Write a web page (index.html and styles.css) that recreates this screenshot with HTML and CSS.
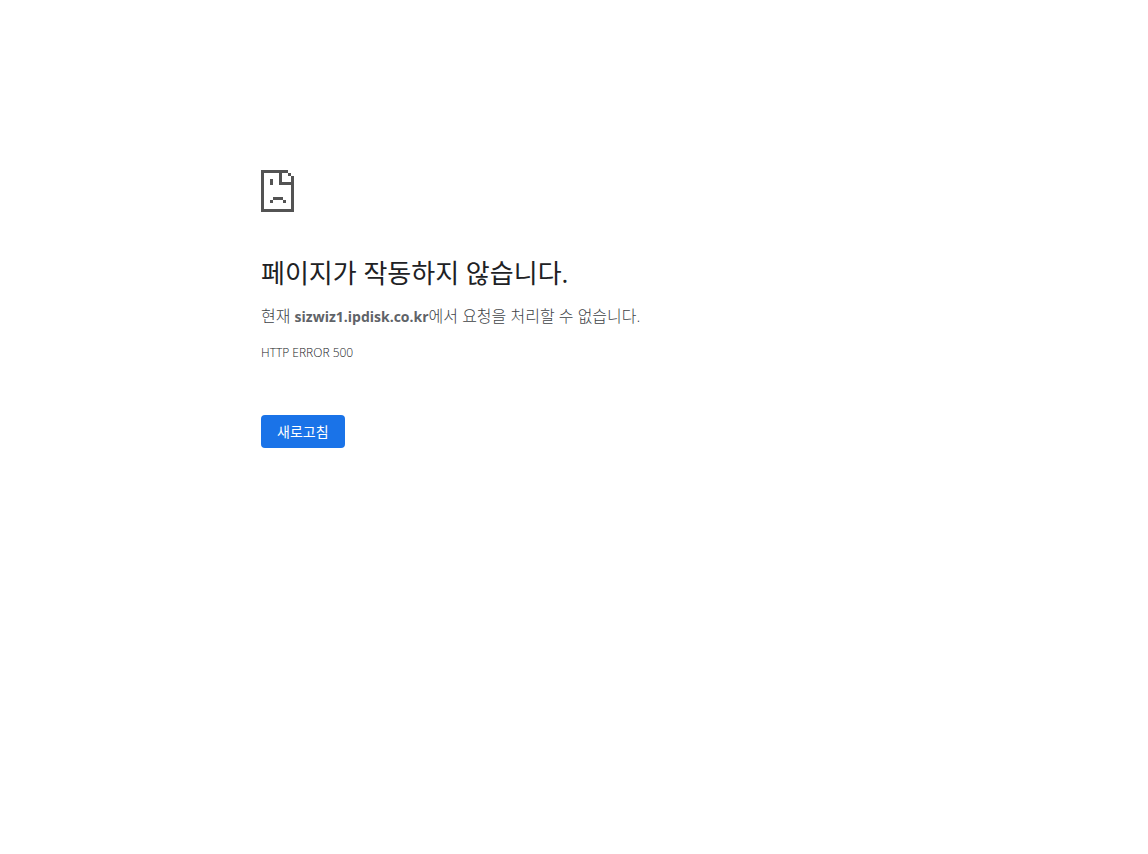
FILE: index.html
```html
<!DOCTYPE html>
<html lang="ko">
<head>
  <meta charset="UTF-8">
  <meta name="viewport" content="width=device-width, initial-scale=1">
  <title>sizwiz1.ipdisk.co.kr</title>
  <link rel="stylesheet" href="styles.css">
</head>
<body>

  <main class="error-page">
    <svg class="icon" viewBox="0 0 33 42" shape-rendering="crispEdges" aria-hidden="true">
      <path d="M0 0H27V3H30V6H33V42H0ZM3 3V39H30V15H18V3ZM21 3V12H30V6H27V3Z" fill-rule="evenodd"/>
      <path d="M9 9h3v6h-3zM12 27h10v3h-10zM9 30h3v3h-3zM22 30h3v3h-3z"/>
    </svg>
    <h1 class="title">페이지가 작동하지 않습니다.</h1>
    <p class="summary">현재 <strong>sizwiz1.ipdisk.co.kr</strong>에서 요청을 처리할 수 없습니다.</p>
    <p class="error-code">HTTP ERROR 500</p>
    <button type="button" class="reload" onclick="location.reload()">새로고침</button>
  </main>

</body>
</html>
```
FILE: styles.css
```css
body {
  margin: 0;
  background: #fff;
  color: #404347;
  font-family: 'Open Sans', 'Noto Sans CJK KR', sans-serif;
  font-size: 16px;
  font-weight: 300;
}

.error-page {
  box-sizing: border-box;
  max-width: 626px;
  margin: 0 auto;
  padding-top: 170px;
}

.icon {
  display: block;
  width: 33px;
  height: 42px;
  fill: #535353;
}

.title {
  margin: 43px 0 13px;
  color: #202124;
  font-size: 26px;
  font-weight: 400;
  line-height: 36px;
}

.summary {
  margin: 0 0 15px;
  line-height: 24px;
}

.summary strong {
  color: #5f6368;
  font-size: 14px;
  font-weight: 700;
}

.error-code {
  margin: 0;
  color: #202124;
  font-size: 12px;
  line-height: 18px;
}

.reload {
  margin-top: 53px;
  padding: 0 16px 2px;
  height: 33px;
  border: 0;
  border-radius: 4px;
  background: #1a73e8;
  color: #fff;
  font-family: inherit;
  font-size: 14px;
  cursor: pointer;
}

.reload:hover {
  background: #1765cc;
}
```
